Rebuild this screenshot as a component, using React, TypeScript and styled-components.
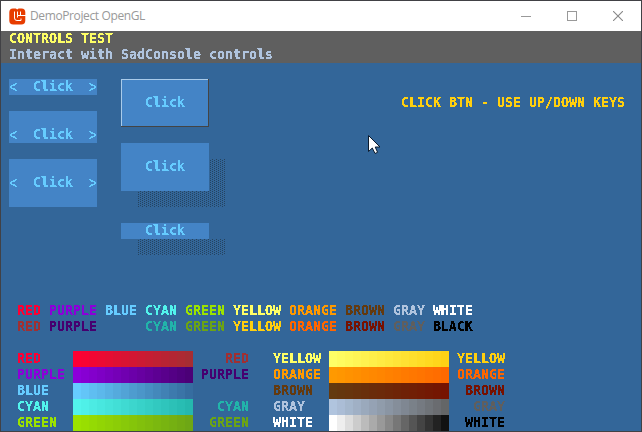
import React from "react";
import styled, { createGlobalStyle, css } from "styled-components";

const GlobalStyle = createGlobalStyle`
  html, body { margin: 0; padding: 0; overflow: hidden; }
  * { box-sizing: border-box; }
`;

const CELL_W = 8;
const CELL_H = 16;

const Window = styled.div`
  width: 642px;
  height: 432px;
  border: 1px solid #414145;
  display: flex;
  flex-direction: column;
  background: #336699;
  position: relative;
`;

const TitleBar = styled.header`
  height: 30px;
  flex: none;
  display: flex;
  align-items: center;
  background: #fff;
  padding-left: 8px;
`;

const Title = styled.h1`
  margin: 0 auto 0 4px;
  font: 400 12px/16px "Open Sans", "Noto Sans", sans-serif;
  letter-spacing: -0.38px;
  color: #999;
  white-space: nowrap;
`;

const CaptionButton = styled.button`
  width: 46px;
  height: 30px;
  padding: 0;
  border: 0;
  background: none;
  display: grid;
  place-items: center;
`;

const FilterDefs = styled.svg`
  position: absolute;
`;

const Console = styled.main`
  height: 400px;
  display: flex;
  flex-direction: column;
  font: 700 13.29px/16px "DejaVu Sans Mono", monospace;
  white-space: pre;
`;

const Glyphs = styled.span<{ $color: string }>`
  display: block;
  height: ${CELL_H}px;
  color: ${(p) => p.$color};
  filter: url(#crisp);
`;

const Arrow = styled(Glyphs)`
  font-weight: 400;
  transform: scaleY(1.25);
`;

const Header = styled.div`
  height: 32px;
  padding-left: 8px;
  background: #5f5f5f;
`;

const Controls = styled.section`
  height: 240px;
  padding: 16px 16px 0 8px;
  display: flex;
  align-items: flex-start;
`;

const ButtonColumn = styled.div<{ $left?: number }>`
  width: 88px;
  margin-left: ${(p) => p.$left ?? 0}px;
  display: flex;
  flex-direction: column;
  gap: 16px;
`;

const ArrowButton = styled.button<{ $rows: number; $top?: number }>`
  display: flex;
  justify-content: space-between;
  align-items: flex-start;
  width: 88px;
  height: ${(p) => p.$rows * CELL_H}px;
  padding: ${(p) => (p.$top ?? 0) * CELL_H}px 0 0;
  border: 0;
  background: #4484c6;
  font: inherit;
  white-space: pre;
`;

const BlockButton = styled.button<{ $rows: number; $look: "bevel" | "shadow" }>`
  position: relative;
  display: flex;
  align-items: center;
  width: 88px;
  height: ${(p) => p.$rows * CELL_H}px;
  padding: 0 0 0 24px;
  border: 0;
  background: #4484c6;
  font: inherit;
  ${(p) =>
    p.$look === "bevel"
      ? css`
          box-shadow: inset -1px -1px #444, inset 1px 1px #a9cbea;
        `
      : css`
          margin-bottom: 16px;
        `}
`;

const Dither = styled.i<{ $top: number; $left: number; $w: number; $h: number }>`
  position: absolute;
  top: ${(p) => p.$top}px;
  left: ${(p) => p.$left}px;
  width: ${(p) => p.$w}px;
  height: ${(p) => p.$h}px;
  background-image: conic-gradient(from 0deg at 1px 1px, transparent 270deg, #25435f 0),
    conic-gradient(from 0deg at 1px 1px, transparent 270deg, #25435f 0);
  background-size: 4px 2px;
  background-position: 3px 0, 1px 1px;
`;

const Hint = styled.div`
  margin: 16px 0 0 auto;
`;

const Names = styled.div`
  display: flex;
  gap: ${CELL_W}px;
  padding-left: 16px;
`;

const Ramps = styled.section`
  display: grid;
  grid-template-columns: 232px 232px;
  column-gap: 24px;
  padding: 16px 0 0 16px;
`;

const RampRow = styled.div`
  display: grid;
  grid-template-columns: 56px 120px 56px;
  height: ${CELL_H}px;
`;

const Bar = styled.div`
  display: flex;
`;

const Step = styled.i<{ $c: string }>`
  width: ${CELL_W}px;
  height: ${CELL_H}px;
  background: ${(p) => p.$c};
`;

const EndLabel = styled.div`
  display: flex;
  justify-content: flex-end;
`;

const Pointer = styled.svg`
  position: absolute;
  left: 366px;
  top: 133px;
`;

type RGB = [number, number, number];
interface Hue {
  name: string;
  from: RGB;
  to: RGB;
  dark?: string;
  end?: string;
}

const LEFT: Hue[] = [
  { name: "RED", from: [255, 0, 51], to: [160, 48, 51], dark: "RED", end: "RED" },
  { name: "PURPLE", from: [140, 0, 218], to: [70, 0, 112], dark: "PURPLE", end: "PURPLE" },
  { name: "BLUE", from: [102, 204, 255], to: [51, 102, 153] },
  { name: "CYAN", from: [82, 244, 236], to: [34, 180, 170], dark: "CYAN", end: "CYAN" },
  { name: "GREEN", from: [156, 226, 0], to: [107, 163, 22], dark: "GREEN", end: "GREEN" },
];
const RIGHT: Hue[] = [
  { name: "YELLOW", from: [255, 255, 102], to: [255, 207, 15], dark: "YELLOW", end: "YELLOW" },
  { name: "ORANGE", from: [255, 153, 0], to: [255, 102, 0], dark: "ORANGE", end: "ORANGE" },
  { name: "BROWN", from: [100, 58, 15], to: [119, 17, 0], dark: "BROWN", end: "BROWN" },
  { name: "GRAY", from: [176, 196, 222], to: [95, 95, 95], dark: "GRAY", end: "GRAY" },
  { name: "WHITE", from: [255, 255, 255], to: [0, 0, 0], dark: "BLACK", end: "WHITE" },
];
const HUES = [...LEFT, ...RIGHT];

const SKY = "#66ccff";

const rgb = (c: RGB) => `rgb(${c.join(",")})`;
const mix = (a: RGB, b: RGB, t: number) =>
  rgb(a.map((v, i) => Math.round(v + (b[i] - v) * t)) as RGB);

const RampGroup = ({ hues }: { hues: Hue[] }) => (
  <div>
    {hues.map((h) => (
      <RampRow key={h.name}>
        <Glyphs $color={rgb(h.from)}>{h.name}</Glyphs>
        <Bar>
          {Array.from({ length: 15 }, (_, i) => (
            <Step key={i} $c={mix(h.from, h.to, i / 15)} />
          ))}
        </Bar>
        <EndLabel>{h.end && <Glyphs $color={rgb(h.to)}>{h.end}</Glyphs>}</EndLabel>
      </RampRow>
    ))}
  </div>
);

const ClickWithArrows = ({ rows, top }: { rows: number; top?: number }) => (
  <ArrowButton $rows={rows} $top={top}>
    <Arrow $color={SKY}>&lt;</Arrow>
    <Glyphs $color={SKY}>Click</Glyphs>
    <Arrow $color={SKY}>&gt;</Arrow>
  </ArrowButton>
);

const Logo = () => (
  <svg width="17" height="17" viewBox="0 0 17 17">
    <path d="M4 0.5H6.8L8.2 1.6L9.6 0.5H12.5Q16.3 0.5 16.3 4.3V12.5Q16.3 16.5 12.3 16.5H4.3Q0.3 16.5 0.3 12.5V4.3Q0.3 0.5 4 0.5Z" fill="#e73c00" />
    <path d="M5.5 3.5V10Q5.5 12.5 8 12.5H12V10.5M8.5 9.5V7.5H17M11.5 3.5V7.5M8.5 3.5V7.5" fill="none" stroke="#fff" strokeWidth="1" />
  </svg>
);

const App = () => (
  <Window>
    <GlobalStyle />
    <FilterDefs width="0" height="0">
      <filter id="crisp" x="0" y="0" width="1" height="1" colorInterpolationFilters="sRGB">
        <feComponentTransfer>
          <feFuncA type="discrete" tableValues="0 0 1 1 1" />
        </feComponentTransfer>
      </filter>
    </FilterDefs>
    <TitleBar>
      <Logo />
      <Title>DemoProject OpenGL</Title>
      <CaptionButton aria-label="Minimize">
        <svg width="10" height="10"><path d="M0 5.5H10" stroke="#999" /></svg>
      </CaptionButton>
      <CaptionButton aria-label="Maximize">
        <svg width="10" height="10"><rect x=".5" y=".5" width="9" height="9" fill="none" stroke="#999" /></svg>
      </CaptionButton>
      <CaptionButton aria-label="Close">
        <svg width="10" height="10"><path d="M0 0L10 10M10 0L0 10" stroke="#888" strokeWidth="1.1" /></svg>
      </CaptionButton>
    </TitleBar>
    <Console>
      <Header>
        <Glyphs $color="#ffff66">CONTROLS TEST</Glyphs>
        <Glyphs $color="#b0c4de">Interact with SadConsole controls</Glyphs>
      </Header>
      <Controls>
        <ButtonColumn>
          <ClickWithArrows rows={1} />
          <ClickWithArrows rows={2} top={1} />
          <ClickWithArrows rows={3} top={1} />
        </ButtonColumn>
        <ButtonColumn $left={24}>
          <BlockButton $rows={3} $look="bevel">
            <Glyphs $color={SKY}>Click</Glyphs>
          </BlockButton>
          <BlockButton $rows={3} $look="shadow">
            <Glyphs $color={SKY}>Click</Glyphs>
            <Dither $top={16} $left={88} $w={16} $h={32} />
            <Dither $top={48} $left={16} $w={88} $h={16} />
          </BlockButton>
          <BlockButton $rows={1} $look="shadow">
            <Glyphs $color={SKY}>Click</Glyphs>
            <Dither $top={16} $left={16} $w={88} $h={16} />
          </BlockButton>
        </ButtonColumn>
        <Hint><Glyphs $color="#ffcf0f">CLICK BTN - USE UP/DOWN KEYS</Glyphs></Hint>
      </Controls>
      <Names>
        {HUES.map((h) => <Glyphs key={h.name} $color={rgb(h.from)}>{h.name}</Glyphs>)}
      </Names>
      <Names>
        {HUES.map((h) => <Glyphs key={h.name} $color={rgb(h.to)}>{h.dark ?? "    "}</Glyphs>)}
      </Names>
      <Ramps>
        <RampGroup hues={LEFT} />
        <RampGroup hues={RIGHT} />
      </Ramps>
    </Console>
    <Pointer width="15" height="22" viewBox="0 0 15 22">
      <path d="M1.5 1.5V17.5L5.3 14L8 19.5L10.6 18.3L8.2 13H13Z" fill="#fff" stroke="#0b1a2c" />
    </Pointer>
  </Window>
);

export default App;
